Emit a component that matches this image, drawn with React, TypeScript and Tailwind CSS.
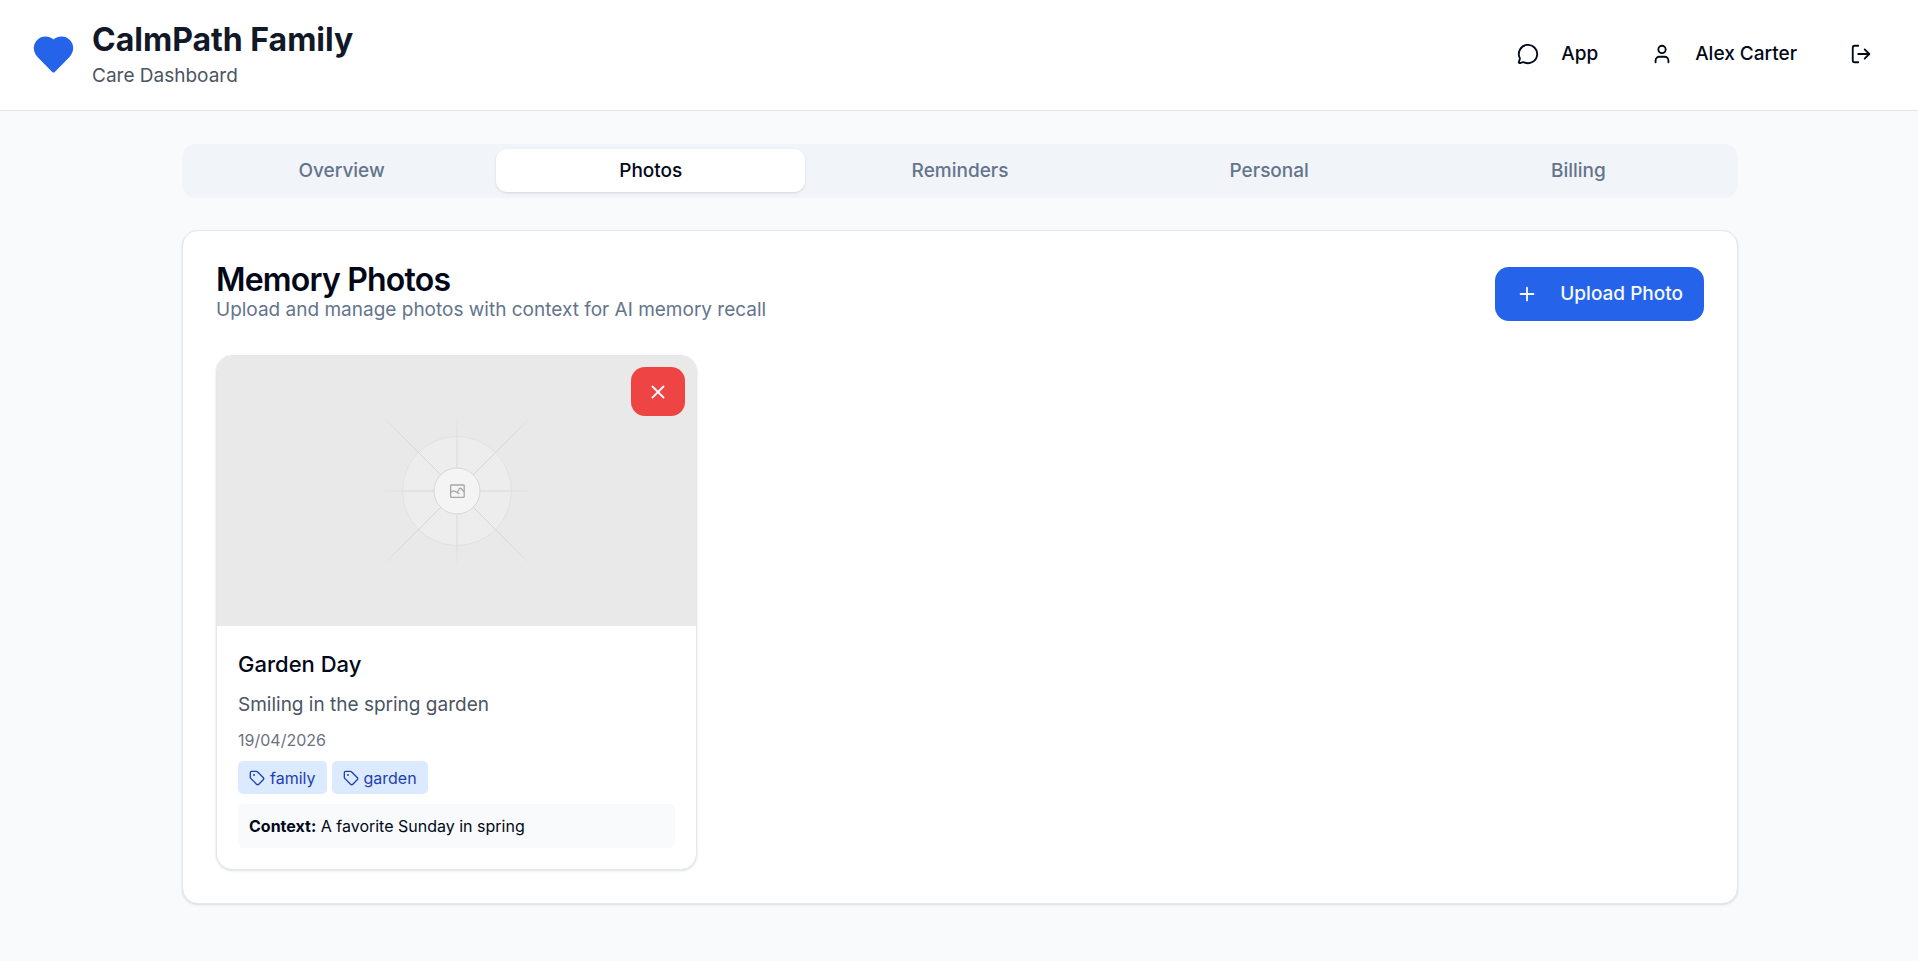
import React, { useState } from 'react';
import { LogOut, MessageCircle, Plus, Tag, User, X } from 'lucide-react';

interface Photo {
  id: number;
  title: string;
  description: string;
  date: string;
  tags: string[];
  context: string;
}

const TABS = ['Overview', 'Photos', 'Reminders', 'Personal', 'Billing'];

const PHOTOS: Photo[] = [
  {
    id: 1,
    title: 'Garden Day',
    description: 'Smiling in the spring garden',
    date: '19/04/2026',
    tags: ['family', 'garden'],
    context: 'A favorite Sunday in spring',
  },
];

const HeartLogo: React.FC = () => (
  <svg
    viewBox="0 0 24 24"
    className="size-[43px] shrink-0 fill-[#2563eb] stroke-[#2563eb]"
    strokeWidth="2"
    strokeLinecap="round"
    strokeLinejoin="round"
    aria-hidden="true"
  >
    <path d="M19 14c1.49-1.46 3-3.21 3-5.5A5.5 5.5 0 0 0 16.5 3c-1.76 0-3 .5-4.5 2-1.5-1.5-2.74-2-4.5-2A5.5 5.5 0 0 0 2 8.5c0 2.3 1.5 4.05 3 5.5l7 7Z" />
  </svg>
);

// Shown while a photo has no image: rays that fade out around a small picture icon
const PhotoPlaceholder: React.FC = () => (
  <svg viewBox="-80 -80 160 160" className="size-40" fill="none" aria-hidden="true">
    <defs>
      <radialGradient id="ray" gradientUnits="userSpaceOnUse" cx="0" cy="0" r="108">
        <stop offset="0.6" stopColor="#d6d6d6" />
        <stop offset="0.75" stopColor="#dadada" />
        <stop offset="1" stopColor="#e9e9e9" />
      </radialGradient>
      <radialGradient id="ray-straight" gradientUnits="userSpaceOnUse" cx="0" cy="0" r="76">
        <stop offset="0.6" stopColor="#d9d9d9" />
        <stop offset="0.75" stopColor="#dcdcdc" />
        <stop offset="1" stopColor="#e9e9e9" />
      </radialGradient>
    </defs>
    <circle r="54.5" fill="#ededed" stroke="#e1e1e1" />
    <path d="M-76 0H76M0 -76V76" stroke="url(#ray-straight)" />
    <path d="M-76 -76L76 76M76 -76L-76 76" stroke="url(#ray)" />
    <circle r="23" fill="#f4f4f4" stroke="#d6d6d6" />
    <g stroke="#a6a6a6" strokeWidth="1.3" strokeLinejoin="round">
      <rect x="-6.4" y="-6" width="13.6" height="12.4" rx="0.8" />
      <path d="M-6.4 1.6L-5 0.4C-4 -0.2 -2.7 -0.2 -1.8 0.6C-0.8 1.5 0.2 1.4 0.8 0.4L2 -1.8C2.6 -3 3.6 -3 4.4 -2.2L7.2 1M-0.4 1.3L2.3 2.9" />
    </g>
  </svg>
);

const PhotoCard: React.FC<{ photo: Photo; onDelete: () => void }> = ({ photo, onDelete }) => (
  <article className="overflow-hidden rounded-2xl border border-[#e2e8f0] bg-white shadow-sm">
    <div className="relative flex h-[270px] items-center justify-center bg-[#e9e9e9]">
      <PhotoPlaceholder />
      <button
        type="button"
        onClick={onDelete}
        aria-label={`Delete ${photo.title}`}
        className="absolute top-[11px] right-[11px] flex h-[49px] w-[54px] items-center justify-center rounded-[14px] bg-[#ef4444] text-slate-50 hover:bg-red-600"
      >
        <X size={22} />
      </button>
    </div>
    <div className="flex flex-col gap-2.5 px-[21px] pt-[22px] pb-[21px]">
      <h3 className="text-[22px] leading-[33px] font-medium">{photo.title}</h3>
      <p className="text-[19px] leading-7 text-[#4b5563]">{photo.description}</p>
      <p className="text-base leading-[22px] text-[#6b7280]">{photo.date}</p>
      <div className="flex flex-wrap gap-[5px]">
        {photo.tags.map((tag) => (
          <span
            key={tag}
            className="flex h-[33px] items-center gap-[5px] rounded-[5px] bg-[#dbeafe] px-[11px] text-base leading-[22px] text-[#1e40af]"
          >
            <Tag size={16} />
            {tag}
          </span>
        ))}
      </div>
      <p className="rounded-[5px] bg-[#f8fafc] p-[11px] text-base leading-[22px]">
        <strong className="font-bold">Context:</strong> {photo.context}
      </p>
    </div>
  </article>
);

const App: React.FC = () => {
  const [activeTab, setActiveTab] = useState('Photos');
  const [photos, setPhotos] = useState(PHOTOS);

  return (
    <div className="min-h-screen bg-[#f8fafc] font-['Inter',sans-serif] text-[#020817]">
      <header className="flex items-center justify-between border-b border-[#e2e8f0] bg-white px-8 pt-[18px] pb-5">
        <div className="flex items-center gap-[17px]">
          <HeartLogo />
          <div>
            <h1 className="text-[32px] leading-[44px] font-bold text-[#111827]">CalmPath Family</h1>
            <p className="text-[19px] leading-7 text-[#4b5563]">Care Dashboard</p>
          </div>
        </div>
        <nav className="flex items-center gap-[25px] text-[19px] leading-7 font-medium">
          <a href="#app" className="flex items-center gap-[22px] px-3.5">
            <MessageCircle size={22} />
            App
          </a>
          <button type="button" className="flex items-center gap-[22px] px-3.5">
            <User size={22} />
            Alex Carter
          </button>
          <button type="button" aria-label="Log out" className="px-3.5">
            <LogOut size={22} />
          </button>
        </nav>
      </header>

      <main className="mx-auto max-w-[1622px] pt-[33px] pr-8 pb-14 pl-[34px]">
        <div role="tablist" className="grid grid-cols-5 rounded-[14px] bg-[#f1f5f9] px-[5px] pt-[5px] pb-1.5">
          {TABS.map((tab) => (
            <button
              key={tab}
              type="button"
              role="tab"
              aria-selected={tab === activeTab}
              onClick={() => setActiveTab(tab)}
              className={`h-[43px] rounded-[11px] text-[19px] leading-7 font-medium ${
                tab === activeTab ? 'bg-white text-[#020817] shadow-sm' : 'text-[#64748b]'
              }`}
            >
              {tab}
            </button>
          ))}
        </div>

        <section className="mt-8 rounded-2xl border border-[#e2e8f0] bg-white px-[33px] pt-8 pb-[33px] shadow-sm">
          <div className="flex items-center justify-between">
            <div>
              <h2 className="text-[32px] leading-[33px] font-semibold tracking-tight">Memory Photos</h2>
              <p className="text-[19px] leading-7 text-[#64748b]">
                Upload and manage photos with context for AI memory recall
              </p>
            </div>
            <button
              type="button"
              className="flex h-[54px] items-center gap-[22px] rounded-[14px] bg-[#2563eb] px-[21px] text-[19px] leading-7 font-medium text-slate-50 hover:bg-blue-700"
            >
              <Plus size={22} />
              Upload Photo
            </button>
          </div>

          <div className="mt-[31px] grid grid-cols-1 gap-[22px] md:grid-cols-2 lg:grid-cols-3">
            {photos.map((photo) => (
              <PhotoCard
                key={photo.id}
                photo={photo}
                onDelete={() => setPhotos(photos.filter((p) => p.id !== photo.id))}
              />
            ))}
          </div>
        </section>
      </main>
    </div>
  );
};

export default App;
